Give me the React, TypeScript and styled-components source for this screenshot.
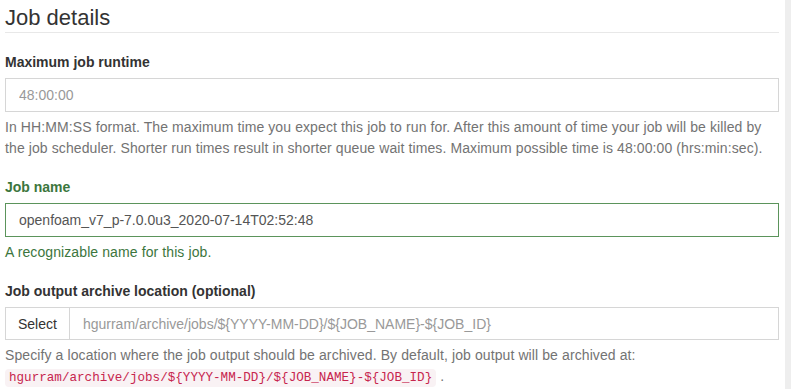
import styled, { createGlobalStyle } from 'styled-components';

const GlobalStyle = createGlobalStyle`
  html, body {
    margin: 0;
    padding: 0;
    background: #fff;
  }

  body {
    font-family: "Liberation Sans", Arial, sans-serif;
    font-size: 14px;
    color: #333;
  }

  * {
    box-sizing: border-box;
  }
`;

const archivePath = 'hgurram/archive/jobs/${YYYY-MM-DD}/${JOB_NAME}-${JOB_ID}';

/** job details form */
export default function App() {
  return (
    <>
      <GlobalStyle />
      <PageLayout>
        <FormPanel>
          <SectionTitle>Job details</SectionTitle>

          <FieldGroup>
            <FieldLabel htmlFor="runtime">Maximum job runtime</FieldLabel>
            <TextInput id="runtime" placeholder="48:00:00" />
            <HelpText>
              In HH:MM:SS format. The maximum time you expect this job to run for. After this amount of time your job
              will be killed by the job scheduler. Shorter run times result in shorter queue wait times. Maximum
              possible time is 48:00:00 (hrs:min:sec).
            </HelpText>
          </FieldGroup>

          <FieldGroup>
            <FieldLabel htmlFor="jobname" $success>
              Job name
            </FieldLabel>
            <TextInput id="jobname" defaultValue="openfoam_v7_p-7.0.0u3_2020-07-14T02:52:48" $success />
            <HelpText $success>A recognizable name for this job.</HelpText>
          </FieldGroup>

          <FieldGroup>
            <FieldLabel htmlFor="archive">Job output archive location (optional)</FieldLabel>
            <InputGroup>
              <SelectButton type="button">Select</SelectButton>
              <GroupInput id="archive" placeholder={archivePath} />
            </InputGroup>
            <HelpText>
              Specify a location where the job output should be archived. By default, job output will be archived at:
              <br />
              <PathCode>{archivePath}</PathCode> .
            </HelpText>
          </FieldGroup>
        </FormPanel>
        <ScrollTrack />
      </PageLayout>
    </>
  );
}

const PageLayout = styled.div`
  display: flex;
  width: 791px;
  min-height: 389px;
`;

const FormPanel = styled.div`
  flex: 1;
  padding: 0 6px 0 5px;
`;

const ScrollTrack = styled.div`
  width: 6px;
  background-color: #eeeeee;
`;

const SectionTitle = styled.h3`
  margin: 6px 0 0;
  padding-bottom: 2px;
  border-bottom: 1px solid #e8e8e8;
  font-size: 22px;
  font-weight: 400;
  line-height: 24px;
  color: #333;
`;

const FieldGroup = styled.div`
  display: flex;
  flex-direction: column;
  margin-top: 18px;

  &:first-of-type {
    margin-top: 19px;
  }
`;

const FieldLabel = styled.label<{ $success?: boolean }>`
  margin-bottom: 6px;
  font-size: 14px;
  font-weight: 700;
  line-height: 20px;
  color: ${({ $success }) => ($success ? '#3c763d' : '#333')};
`;

const TextInput = styled.input<{ $success?: boolean }>`
  width: 100%;
  height: 34px;
  padding: 6px 13px;
  border: 1px solid ${({ $success }) => ($success ? '#5b945b' : '#d6d6d6')};
  border-radius: 0;
  outline: none;
  font-family: "Liberation Sans", Arial, sans-serif;
  font-size: 14px;
  color: #555;
  background: #fff;

  &::placeholder {
    color: #999;
  }
`;

const HelpText = styled.p<{ $success?: boolean }>`
  margin: 5px 0 0;
  font-size: 14px;
  line-height: 21px;
  letter-spacing: 0.1px;
  color: ${({ $success }) => ($success ? '#3c763d' : '#737373')};
`;

const InputGroup = styled.div`
  display: flex;
  height: 33px;
`;

const SelectButton = styled.button`
  flex-shrink: 0;
  padding: 6px 12px;
  border: 1px solid #d6d6d6;
  border-radius: 0;
  background: #fff;
  font-family: "Liberation Sans", Arial, sans-serif;
  font-size: 14px;
  color: #333;
`;

const GroupInput = styled(TextInput)`
  flex: 1;
  height: 33px;
  margin-left: -1px;
`;

const PathCode = styled.code`
  padding: 2px 4px;
  border-radius: 4px;
  background-color: #f9f2f4;
  font-family: "Liberation Mono", "Courier New", monospace;
  font-size: 90%;
  letter-spacing: 0;
  color: #c7254e;
`;
